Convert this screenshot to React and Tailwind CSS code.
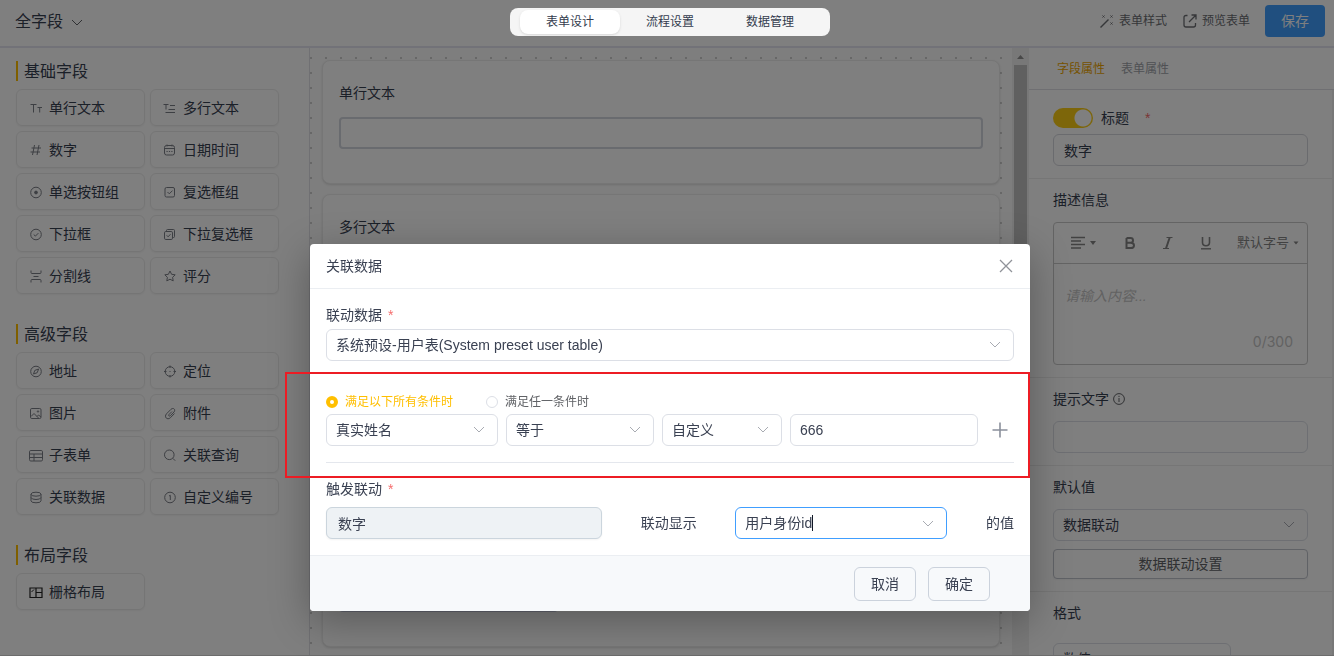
import { useState } from 'react'
import clsx from 'clsx'

// 14x14 line icons used by the field palette
const ICONS = {
  text: <path d="M1.5 3.5h6M4.5 3.5v8M8.5 6.5h4.5M10.7 6.5v5" />,
  textarea: <path d="M0.5 3.5h5M3 3.5v5M7 4.5h5M5.5 8.5h6.5M2.5 11.5h9.5" />,
  number: <path d="M5.5 2L3.5 12M10 2L8 12M2.5 5h9.5M1.5 9h9.5" />,
  date: (
    <>
      <rect x="1.5" y="2.5" width="10" height="9.5" rx="2" />
      <path d="M1.5 5.5h10M4 1.5v2M9 1.5v2" />
      <path d="M3.5 8.5h6" strokeDasharray="1.2 1.2" />
    </>
  ),
  radio: (
    <>
      <circle cx="7" cy="7.5" r="5.3" />
      <circle cx="7" cy="7.5" r="1.4" fill="currentColor" />
    </>
  ),
  checkbox: (
    <>
      <rect x="2" y="2.5" width="9.5" height="9.5" rx="1.5" />
      <path d="M4.5 7l1.8 1.8L9.5 5.6" />
    </>
  ),
  select: (
    <>
      <circle cx="7" cy="7.5" r="5.3" />
      <path d="M4.7 7.5l1.7 1.6 3-3" />
    </>
  ),
  multiSelect: (
    <>
      <rect x="1.5" y="4.5" width="8" height="8" rx="1.3" />
      <path d="M3.5 4.3V3.5Q3.5 2.5 4.5 2.5H10.5Q11.5 2.5 11.5 3.5V9.5Q11.5 10.5 10.5 10.5H9.7M3.7 8.3l1.4 1.5 2.4-2.6" />
    </>
  ),
  divider: <path d="M2 1.500v2Q2 4.500 3 4.500H11Q12 4.500 12 3.500V1.500M2 13.500V11.500Q2 10.500 3 10.500H11Q12 10.500 12 11.500V13.500M4.500 7.500h5" />,
  star: <path d="M7 2l1.600 3.300 3.600.5-2.600 2.500.6 3.600L7 10.200l-3.200 1.700.6-3.600L1.800 5.800l3.600-.5z" strokeLinejoin="round" />,
  compass: (
    <>
      <circle cx="7" cy="7.5" r="5.3" />
      <path d="M9.6 5L8.2 8.7 4.5 10 5.8 6.4z" />
    </>
  ),
  locate: (
    <>
      <circle cx="7" cy="7.5" r="4.8" />
      <path d="M7 1.500v2.500M7 11v2.500M1 7.500h2.500M10.500 7.500h2.500M6.500 7.500h1" />
    </>
  ),
  image: (
    <>
      <rect x="1.5" y="2.5" width="10.5" height="10" rx="1.3" />
      <path d="M2 10.5l3-3 4.5 4.5M8 10.5l1.5-1.5 2.5 2" />
      <circle cx="9" cy="5.5" r=".7" />
    </>
  ),
  clip: (
    <path d="M9 5.500L6 8.500C5 9.700 6.400 10.700 7.400 9.700L11 6C13 3.500 10.300 1.200 8 3.300L3.500 7.800C.7 11 4.300 14.500 7.300 11.800L11.500 7.500" />
  ),
  table: (
    <>
      <rect x="0.5" y="2.5" width="13" height="10.5" rx="1.3" />
      <path d="M0.5 6h13M0.5 9.5h13M5 6v7" />
    </>
  ),
  search: (
    <>
      <circle cx="6.3" cy="6.8" r="4.8" />
      <path d="M9.8 10.3l2.4 2.4" />
    </>
  ),
  database: (
    <>
      <ellipse cx="7" cy="4.2" rx="5" ry="2" />
      <path d="M2 4.2v6.6Q2 12.8 7 12.8T12 10.8V4.2M2 7.5Q2.5 9.5 7 9.5T12 7.5" />
    </>
  ),
  serial: (
    <>
      <circle cx="7" cy="7.5" r="5.3" />
      <path d="M6 6l1.3-.7V10" />
    </>
  ),
  grid: (
    <g stroke="#222" strokeWidth="1.2">
      <path d="M1 3h12v9.500H1zM7 3v9.500M7 7.500h6" />
      <path d="M2.500 7l2.500-2.500" strokeWidth="1" />
    </g>
  ),
}

const PALETTE = [
  {
    title: '基础字段',
    items: [
      ['text', '单行文本'],
      ['textarea', '多行文本'],
      ['number', '数字'],
      ['date', '日期时间'],
      ['radio', '单选按钮组'],
      ['checkbox', '复选框组'],
      ['select', '下拉框'],
      ['multiSelect', '下拉复选框'],
      ['divider', '分割线'],
      ['star', '评分'],
    ],
  },
  {
    title: '高级字段',
    items: [
      ['compass', '地址'],
      ['locate', '定位'],
      ['image', '图片'],
      ['clip', '附件'],
      ['table', '子表单'],
      ['search', '关联查询'],
      ['database', '关联数据'],
      ['serial', '自定义编号'],
    ],
  },
  { title: '布局字段', items: [['grid', '栅格布局']] },
]

const TABS = ['表单设计', '流程设置', '数据管理']

function Chevron({ className }) {
  return (
    <svg viewBox="0 0 12 7" fill="none" stroke="currentColor" className={clsx('h-[7px] w-3', className)}>
      <path d="M1 1l5 5 5-5" />
    </svg>
  )
}

function Select({ label, value, className }) {
  return (
    <div className={clsx('relative', className)}>
      <select
        aria-label={label}
        className="block h-8 w-full appearance-none rounded-md border border-[#dcdfe6] bg-white pl-[9px] pr-8 text-sm text-[#3a4152]"
      >
        <option>{value}</option>
      </select>
      <Chevron className="pointer-events-none absolute right-[13px] top-3 text-[#a8abb2]" />
    </div>
  )
}

function Header() {
  const [active, setActive] = useState(TABS[0])
  return (
    <header className="grid h-12 shrink-0 grid-cols-[1fr_auto_1fr] items-center border-b-2 border-[#e4e4f0] pl-[15px] pr-[9px]">
      <button className="flex items-center gap-2 justify-self-start pb-0.5 text-base">
        全字段
        <Chevron className="text-[#606266]" />
      </button>
      {/* stays bright above the dialog mask */}
      <nav className="relative z-20 mb-0.5 flex h-7 rounded-lg bg-[#f5f5f5] px-2.5 py-0.5">
        {TABS.map((tab) => (
          <button
            key={tab}
            onClick={() => setActive(tab)}
            className={clsx('w-25 rounded-lg text-xs text-[#333b4d]', active === tab && 'bg-white shadow-sm')}
          >
            {tab}
          </button>
        ))}
      </nav>
      <div className="flex items-center justify-self-end pb-1 text-xs text-[#6c6e73]">
        <button className="mr-4 flex items-center gap-[5px]">
          <svg viewBox="0 0 14 14" fill="none" stroke="currentColor" className="size-3.5">
            <path d="M.5 13.5l8-8" strokeWidth="1.4" />
            <path d="M2.5 1.5l2 2m0-2l-2 2M10.5 1.5l2 2m0-2l-2 2M10.5 8.5l2 2m0-2l-2 2" />
          </svg>
          表单样式
        </button>
        <button className="mr-[15px] flex items-center gap-[5px]">
          <svg viewBox="0 0 14 14" fill="none" stroke="currentColor" strokeWidth="1.3" className="size-3.5">
            <path d="M4.5 1.5H3Q1 1.5 1 3.5v7.500Q1 13 3 13h7.500Q12.500 13 12.500 11V9M6 8l6.500-6.500M8.500 1h4.500v4.500" />
          </svg>
          预览表单
        </button>
        <button className="h-8 w-15 rounded bg-[#409eff] text-sm text-white">保存</button>
      </div>
    </header>
  )
}

function Palette() {
  return (
    <aside className="w-[310px] shrink-0 border-r border-[#e0e0e6] pl-4 pr-[30px] pt-[13px]">
      {PALETTE.map((group) => (
        <section key={group.title} className="mb-[30px]">
          <h2 className="mb-2 h-5 border-l-2 border-[#ffbf00] pl-1.5 text-base leading-[22px]">{group.title}</h2>
          <div className="grid grid-cols-2 gap-[5px]">
            {group.items.map(([icon, name]) => (
              <button
                key={name}
                className="flex h-[37px] items-center gap-1.5 rounded-md border border-[#ebebeb] pl-3 text-sm shadow-xs"
              >
                <svg viewBox="0 0 14 14" fill="none" stroke="currentColor" className="size-3.5 text-[#7b7e86]">
                  {ICONS[icon]}
                </svg>
                {name}
              </button>
            ))}
          </div>
        </section>
      ))}
    </aside>
  )
}

function FormCard({ label, className, children }) {
  return (
    <label className={clsx('flex flex-col rounded-lg border border-[#ececec] bg-white px-4 pb-[34px] pt-[22px] shadow-sm', className)}>
      <span className="mb-3.5 h-5 text-sm leading-5">{label}</span>
      {children}
    </label>
  )
}

function Canvas() {
  return (
    <main className="flex min-w-0 flex-1 bg-white">
      <div className="flex min-w-0 flex-1 bg-[#fdfdfd] bg-[radial-gradient(circle_at_1px_1px,#cfcfcf_1px,transparent_1px)] bg-[size:15px_15px] bg-[position:0_9px] px-3 pb-2 pt-3">
        <div className="flex min-w-0 flex-1 flex-col gap-2.5 rounded-lg bg-[#fdfdfd]">
          <FormCard label="单行文本">
            <input className="h-8 rounded border-2 border-[#d3d6de]" />
          </FormCard>
          <FormCard label="多行文本" className="flex-1">
            <textarea className="flex-1 resize-none rounded border-2 border-[#d3d6de]" />
          </FormCard>
          <FormCard label="数字">
            <input className="h-[33px] w-[219px] rounded border-2 border-[#c4c9dd]" />
          </FormCard>
        </div>
      </div>
      <div className="flex w-[17px] flex-col items-center bg-[#f1f1f1]" aria-hidden="true">
        <svg viewBox="0 0 17 17" className="size-[17px]">
          <path d="M5 11h7L8.500 7z" fill="#909090" />
        </svg>
        <div className="h-80 w-[13px] bg-[#c1c1c1]" />
      </div>
    </main>
  )
}

function Section({ title, info, wide, children }) {
  return (
    <section className="border-b border-[#ececec] px-6 pb-3 pt-[11px]">
      <h3 className={clsx('flex h-5 items-center gap-1 text-sm leading-5', wide ? 'mb-5' : 'mb-3')}>
        {title}
        {info && (
          <svg viewBox="0 0 12 12" fill="none" stroke="#606266" className="size-3">
            <circle cx="6" cy="6" r="5.400" />
            <path d="M6 5v4M6 2.800v1.200" />
          </svg>
        )}
      </h3>
      {children}
    </section>
  )
}

function RichText() {
  return (
    <div className="rounded border border-[#c8c8c8]">
      <div className="flex h-[41px] items-center border-b border-[#c8c8c8] pl-[17px] pr-2 text-[#858585]">
        <button aria-label="对齐" className="mr-[26px] flex items-center gap-1">
          <svg viewBox="0 0 14 14" fill="none" stroke="currentColor" strokeWidth="1.300" className="size-3.5">
            <path d="M0 1.500h14M0 5h10M0 8.500h14M0 12h10" />
          </svg>
          <svg viewBox="0 0 8 4" className="h-1 w-2">
            <path d="M1 0h6L4 4z" fill="currentColor" />
          </svg>
        </button>
        <button aria-label="加粗" className="mr-6">
          <svg viewBox="0 0 14 14" fill="none" stroke="currentColor" strokeWidth="2" className="size-3.5">
            <path d="M3.500 2H7.500Q10 2 10 4.400T7.500 6.800H3.500M7.500 6.800Q11 6.800 11 9.400T7.500 12H3.500V2" />
          </svg>
        </button>
        <button aria-label="斜体" className="mr-6">
          <svg viewBox="0 0 14 14" fill="none" stroke="currentColor" className="size-3.5">
            <path d="M5.500 1.500h6M2 12.500h6" strokeWidth="1.200" />
            <path d="M8.700 1.500L5 12.500" strokeWidth="2" />
          </svg>
        </button>
        <button aria-label="下划线" className="mr-6">
          <svg viewBox="0 0 14 14" fill="none" stroke="currentColor" strokeWidth="1.600" className="size-3.5">
            <path d="M3.500 1v5.500Q3.500 9.700 7 9.700T10.500 6.500V1" />
            <path d="M2 12.800h10" strokeWidth="1.400" />
          </svg>
        </button>
        <button className="flex items-center gap-1 whitespace-nowrap text-[13px]">
          默认字号
          <svg viewBox="0 0 6 4" className="h-1 w-1.5">
            <path d="M0.500 0.500h5L3 3.500z" fill="currentColor" />
          </svg>
        </button>
      </div>
      <div className="flex h-25 flex-col pb-3 pt-[22px]">
        <textarea
          aria-label="描述信息"
          placeholder="请输入内容..."
          className="flex-1 resize-none px-[11px] text-sm placeholder:italic placeholder:text-[#c4c4c4]"
        />
        <span className="pr-3.5 text-right font-['Inter',sans-serif] text-sm leading-5 text-[#c4c4c4]">0/300</span>
      </div>
    </div>
  )
}

function Properties() {
  return (
    <aside className="flex w-[305px] shrink-0 flex-col">
      <nav className="flex h-[42px] shrink-0 items-center gap-4 border-b border-[#dedee4] pl-7 text-xs">
        <button className="text-[#eda500]">字段属性</button>
        <button className="text-[#a0a3a9]">表单属性</button>
      </nav>
      <div className="min-h-0 flex-1 overflow-hidden border-r-2 border-[#f1f1f1]">
        <section className="border-b border-[#ececec] px-6 pb-3 pt-[18px]">
          <label className="mb-1.5 flex h-5 items-center text-sm">
            <input
              type="checkbox"
              defaultChecked
              className="mr-2 h-5 w-10 appearance-none rounded-full bg-[#facc15] bg-[radial-gradient(circle_at_30px_10px,white_8px,transparent_9px)]"
            />
            标题
            <span className="ml-4 text-[#f56c6c]">*</span>
          </label>
          <input
            aria-label="标题"
            defaultValue="数字"
            className="h-8 w-full rounded-md border border-[#d4d6dc] pl-2.5 text-sm"
          />
        </section>
        <Section title="描述信息">
          <RichText />
        </Section>
        <Section title="提示文字" info>
          <input aria-label="提示文字" className="block h-8 w-full rounded-md border border-[#dcdfe6] px-2.5 text-sm" />
        </Section>
        <Section title="默认值">
          <Select label="默认值" value="数据联动" />
          <button className="mt-2 h-[30px] w-full rounded border border-[#c0c4cc] text-sm text-[#606266] shadow-xs">
            数据联动设置
          </button>
        </Section>
        <Section title="格式" wide>
          <Select label="格式" value="数值" className="w-[178px]" />
        </Section>
      </div>
    </aside>
  )
}

function FieldLabel({ children }) {
  return (
    <div className="flex h-5 items-center gap-1.5 text-sm leading-5">
      {children}
      <span className="text-[#f56c6c]">*</span>
    </div>
  )
}

function LinkDialog() {
  const [mode, setMode] = useState('all')
  return (
    <div
      role="dialog"
      aria-label="关联数据"
      className="relative w-[720px] self-start rounded bg-white text-[#3a4152] shadow-[0_10px_40px_rgba(0,0,0,0.3)]"
    >
      <div className="flex h-[45px] items-center justify-between border-b border-[#ebeef2] pl-4 pr-[17px] text-sm">
        关联数据
        <button aria-label="关闭">
          <svg viewBox="0 0 14 14" fill="none" stroke="#909399" strokeWidth="1.300" className="size-3.5">
            <path d="M1 1l12 12M13 1L1 13" />
          </svg>
        </button>
      </div>

      <div className="p-4">
        <FieldLabel>联动数据</FieldLabel>
        <Select label="联动数据" value="系统预设-用户表(System preset user table)" className="mt-1" />

        <div className="mb-0.5 mt-[31px] flex h-5 items-center gap-[33px] text-xs">
          {[
            ['all', '满足以下所有条件时'],
            ['any', '满足任一条件时'],
          ].map(([key, text]) => (
            <label key={key} className={clsx('flex items-center gap-[7px]', mode === key ? 'text-[#ffbf00]' : 'text-[#606266]')}>
              <input
                type="radio"
                name="mode"
                checked={mode === key}
                onChange={() => setMode(key)}
                className="size-3 appearance-none rounded-full border border-[#dcdfe6] checked:border-4 checked:border-[#ffbf00]"
              />
              {text}
            </label>
          ))}
        </div>
        <div className="flex items-center gap-2">
          <Select label="字段" value="真实姓名" className="w-[172px]" />
          <Select label="条件" value="等于" className="w-[148px]" />
          <Select label="取值方式" value="自定义" className="w-[120px]" />
          <input
            aria-label="值"
            defaultValue="666"
            className="h-8 w-[188px] rounded-md border border-[#dcdfe6] pl-[9px] text-sm"
          />
          <button aria-label="添加条件" className="flex flex-1 justify-center">
            <svg viewBox="0 0 16 16" fill="none" stroke="#8b909c" strokeWidth="1.600" className="size-4">
              <path d="M8 .500v15M.500 8h15" />
            </svg>
          </button>
        </div>
        <hr className="mb-4 mt-4 border-[#e4e7ed]" />

        <FieldLabel>触发联动</FieldLabel>
        <div className="mt-2 flex items-center justify-between text-sm">
          <input
            aria-label="触发联动"
            readOnly
            value="数字"
            className="h-8 w-[276px] rounded-md border border-[#cbd5dd] bg-[#eef2f5] pl-[11px] shadow-xs"
          />
          <span>联动显示</span>
          <div className="flex h-8 w-[212px] items-center rounded-md border border-[#409eff] pl-[9px] pr-3">
            <input role="combobox" aria-label="显示字段" aria-expanded="false" defaultValue="用户身份id" className="field-sizing-content outline-none" />
            <span className="h-4 w-px bg-[#111827]" />
            <Chevron className="ml-auto text-[#a8abb2]" />
          </div>
          <span>的值</span>
        </div>
      </div>

      <div className="flex justify-end gap-3 rounded-b border-t border-[#ebeef2] bg-[#f7f9fb] pb-2.5 pr-10 pt-[11px] text-sm">
        <button className="h-[34px] w-[62px] rounded-md border border-[#cbd2dc]">取消</button>
        <button className="h-[34px] w-[62px] rounded-md border border-[#cbd2dc]">确定</button>
      </div>

      {/* callout round the condition block */}
      <div className="pointer-events-none absolute -left-[25px] right-0 top-32 h-[106px] border-2 border-[#ed1c24]" />
    </div>
  )
}

export default function App() {
  return (
    <div className="flex h-screen flex-col overflow-hidden bg-white font-['Liberation_Sans','Noto_Sans_CJK_SC',sans-serif] text-[#364050]">
      <Header />
      <div className="flex min-h-0 flex-1 border-b border-[#d8d8d8]">
        <Palette />
        <Canvas />
        <Properties />
      </div>
      <div className="fixed inset-0 z-10 bg-black/50" />
      <div className="fixed inset-0 z-30 flex justify-center pl-1.5 pt-[244px]">
        <LinkDialog />
      </div>
    </div>
  )
}
